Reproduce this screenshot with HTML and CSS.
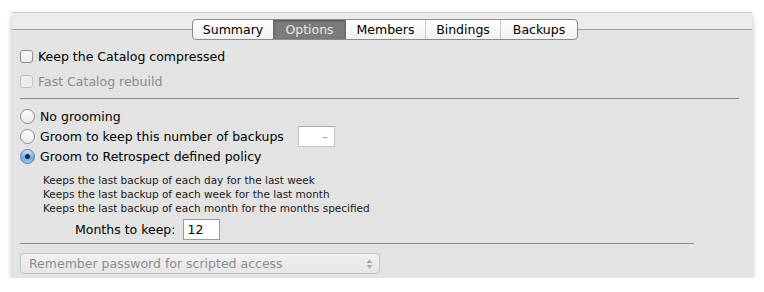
FILE: index.html
```html
<!DOCTYPE html>
<html>
<head>
<meta charset="utf-8" />
<title>Catalog Options</title>
<link rel="stylesheet" href="styles.css">
</head>
<body>
<div class="window">
    <div class="tabstrip">
        <ul class="tabs">
            <li>Summary</li>
            <li class="on">Options</li>
            <li>Members</li>
            <li>Bindings</li>
            <li>Backups</li>
        </ul>
    </div>
    <div class="content">
        <div class="row check-row"><span class="check"></span>Keep the Catalog compressed</div>
        <div class="row check-row disabled"><span class="check"></span>Fast Catalog rebuild</div>
        <div class="sep"></div>
        <div class="row radio-row"><span class="radio"></span>No grooming</div>
        <div class="row radio-row"><span class="radio"></span>Groom to keep this number of backups<span class="field count">&ndash;</span></div>
        <div class="row radio-row"><span class="radio sel"></span>Groom to Retrospect defined policy</div>
        <div class="policy">
            <p>Keeps the last backup of each day for the last week</p>
            <p>Keeps the last backup of each week for the last month</p>
            <p>Keeps the last backup of each month for the months specified</p>
        </div>
        <div class="months">Months to keep:<span class="field num">12</span></div>
        <div class="sep short"></div>
        <div class="popup">
            <span>Remember password for scripted access</span>
            <svg width="7" height="10" viewBox="0 0 7 10"><path d="M3.5 0.5 L6.5 4 L0.5 4 Z M0.5 6 L6.5 6 L3.5 9.5 Z" fill="#a8a8a8"/></svg>
        </div>
    </div>
</div>
</body>
</html>
```

FILE: styles.css
```css
html * { margin:0; padding:0; }
body { background:#fff; font-family:"DejaVu Sans", "Liberation Sans", sans-serif; font-size:12px; color:#000; }

.window{
	margin:12px 12px 0 12px;
	width:740px;
	height:266px;
	background:#e3e3e3;
	border-top:1px solid #cbcbcb;
	box-shadow:0 3px 6px rgba(0,0,0,0.28);
	box-sizing:border-box;
}

.tabstrip{
	height:16px;
	background:#ececec;
	border-bottom:1px solid #a3a3a3;
	display:flex;
	justify-content:center;
	padding-left:6px;
}
.tabs{
	display:flex;
	margin-top:6px;
	height:21px;
	list-style:none;
	border:1px solid #8c8c8c;
	border-radius:4px;
	background:linear-gradient(#ffffff, #f1f1f1);
	box-sizing:border-box;
	overflow:hidden;
	position:relative;
	z-index:1;
}
.tabs li{
	line-height:19px;
	text-align:center;
	border-left:1px solid #c9c9c9;
	font-size:12.5px;
}
.tabs li:first-child{ border-left:0; width:80px; }
.tabs li:nth-child(2){ width:71px; }
.tabs li:nth-child(3){ width:79px; }
.tabs li:nth-child(4){ width:74px; }
.tabs li:nth-child(5){ width:76px; }
.tabs li.on{
	background:#7b7b7b;
	color:#e6e6e6;
	border-left-color:#6a6a6a;
	box-shadow:inset 0 1px 2px rgba(0,0,0,0.35);
}
.tabs li.on + li{ border-left-color:#6a6a6a; }

.content{ padding:16px 0 0 8px; }

.row{
	display:flex;
	align-items:center;
	height:20px;
	font-size:12.5px;
}
.check-row + .check-row{ margin-top:5px; }
.check{
	width:13px;
	height:13px;
	border:1px solid #8d8d8d;
	border-radius:3px;
	background:linear-gradient(#fdfdfd, #ececec);
	box-sizing:border-box;
	margin-right:5px;
}
.disabled{ color:#8b8b8b; }
.disabled .check{ border-color:#c2c2c2; background:#ececec; }

.sep{
	margin-top:7px;
	width:719px;
	height:1px;
	background:#8c8c8c;
}
.sep + .radio-row{ margin-top:7px; }

.radio{
	width:15px;
	height:15px;
	border:1px solid #8d8d8d;
	border-radius:50%;
	background:linear-gradient(#fdfdfd, #e9e9e9);
	box-sizing:border-box;
	margin-right:5px;
	display:flex;
	align-items:center;
	justify-content:center;
}
.radio.sel{
	border-color:#5a7fae;
	background:linear-gradient(#cfe4fb, #6fa6e6 60%, #9cc6f3);
}
.radio.sel::after{
	content:"";
	width:5px;
	height:5px;
	border-radius:50%;
	background:#1c2a3a;
}

.field{
	display:inline-block;
	background:#fff;
	border:1px solid #c4c4c4;
	border-top-color:#a9a9a9;
	box-sizing:border-box;
	height:21px;
	width:37px;
}
.count{
	margin-left:14px;
	text-align:right;
	padding-right:6px;
	color:#8a8a8a;
	font-size:11px;
	line-height:19px;
}
.num{
	margin-left:7px;
	padding-left:4px;
	line-height:19px;
	font-size:12.5px;
	border-color:#9a9a9a;
}

.policy{
	margin:7px 0 0 23px;
	font-size:10.5px;
	color:#1a1a1a;
}
.policy p{ height:14px; line-height:14px; }

.months{
	margin:4px 0 0 55px;
	display:flex;
	align-items:center;
	height:21px;
	font-size:12.5px;
}
.sep.short{ margin-top:3px; width:674px; }

.popup{
	margin-top:9px;
	width:360px;
	height:21px;
	border:1px solid #c3c3c3;
	border-radius:4px;
	background:linear-gradient(#f0f0f0, #e6e6e6);
	box-sizing:border-box;
	display:flex;
	align-items:center;
	justify-content:space-between;
	padding:0 6px 0 8px;
	color:#8e8e8e;
	font-size:12.5px;
}
```
